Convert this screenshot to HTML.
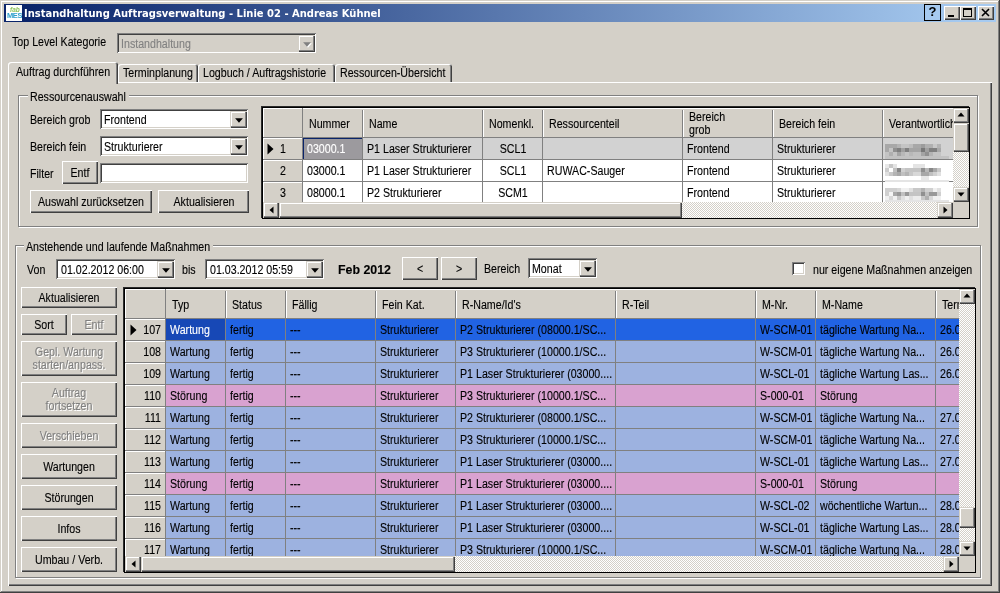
<!DOCTYPE html>
<html lang="de"><head><meta charset="utf-8"><title>Instandhaltung Auftragsverwaltung</title>
<style>
html,body{margin:0;padding:0;background:#D4D0C8;}
body{width:1000px;height:593px;overflow:hidden;position:relative;will-change:transform;font-family:"Liberation Sans",sans-serif;font-size:12.5px;color:#000}
.a{position:absolute;box-sizing:border-box}
.t{position:absolute;white-space:nowrap;font-size:12.5px;line-height:14px;transform:scaleX(0.852);transform-origin:0 0;-webkit-text-stroke:0.12px currentColor}
.b{font-weight:bold;transform:scaleX(.99)}
.tt{font-family:"DejaVu Sans","Liberation Sans",sans-serif;font-weight:bold;font-size:11px;line-height:16px;color:#fff;white-space:nowrap;transform:scaleX(.906);transform-origin:0 0}
.rs{box-shadow:inset 1px 1px 0 #FFFFFF, inset -1px -1px 0 #404040, inset -2px -2px 0 #808080, inset 2px 2px 0 #D4D0C8}
.rs2{box-shadow:inset 1px 1px 0 #D4D0C8, inset -1px -1px 0 #404040, inset -2px -2px 0 #808080, inset 2px 2px 0 #FFFFFF}
.sk{box-shadow:inset 1px 1px 0 #808080, inset -1px -1px 0 #FFFFFF, inset 2px 2px 0 #404040, inset -2px -2px 0 #D4D0C8}
.hc{background:#D4D0C8;border-right:1px solid #808080;border-bottom:1px solid #808080;box-shadow:inset 1px 1px 0 #fff}
.dc{border-right:1px solid #808080;border-bottom:1px solid #808080}
.dz{background-color:#fff;background-image:linear-gradient(45deg,#D4D0C8 25%,transparent 25%,transparent 75%,#D4D0C8 75%),linear-gradient(45deg,#D4D0C8 25%,transparent 25%,transparent 75%,#D4D0C8 75%);background-size:2px 2px;background-position:0 0,1px 1px}
</style></head>
<body>
<div class="a" style="left:0;top:0;width:1000px;height:593px;background:#D4D0C8"></div>
<div class="a" style="left:0px;top:0px;width:999px;height:1px;background:#D4D0C8;"></div>
<div class="a" style="left:0px;top:0px;width:1px;height:592px;background:#D4D0C8;"></div>
<div class="a" style="left:1px;top:1px;width:997px;height:1px;background:#FFFFFF;"></div>
<div class="a" style="left:1px;top:1px;width:1px;height:590px;background:#FFFFFF;"></div>
<div class="a" style="left:999px;top:0px;width:1px;height:593px;background:#404040;"></div>
<div class="a" style="left:0px;top:592px;width:1000px;height:1px;background:#404040;"></div>
<div class="a" style="left:998px;top:1px;width:1px;height:591px;background:#808080;"></div>
<div class="a" style="left:1px;top:591px;width:998px;height:1px;background:#808080;"></div>
<div class="a" style="left:4px;top:4px;width:992px;height:18px;background:linear-gradient(90deg,#0A246A 0%,#0A246A 2%,#A6CAF0 97%,#A6CAF0 100%)"></div>
<div class="a" style="left:6px;top:5px;width:16px;height:16px;background:#fff;overflow:hidden"><span class="a" style="left:3.5px;top:1px;font:italic bold 6.5px/7px 'Liberation Sans',sans-serif;color:#8CC25A;will-change:transform">fab</span><span class="a" style="left:1px;top:7px;font:bold 7.5px/8px 'Liberation Sans',sans-serif;color:#2FA0CC;letter-spacing:-0.4px;will-change:transform">MES</span></div>
<span class="a tt" style="left:23.5px;top:6px">Instandhaltung Auftragsverwaltung - Linie 02 - Andreas Kühnel</span>
<div class="a" style="left:924px;top:4px;width:17px;height:17px;border:1px solid #000;box-sizing:border-box;background:#A6CAF0"></div>
<span class="a" style="left:924px;top:4px;width:17px;text-align:center;font:bold 13px/16px 'Liberation Sans',sans-serif;color:#000">?</span>
<div class="a rs" style="left:944px;top:6px;width:16px;height:14px;background:#D4D0C8"></div>
<div class="a rs" style="left:960px;top:6px;width:16px;height:14px;background:#D4D0C8"></div>
<div class="a rs" style="left:978px;top:6px;width:16px;height:14px;background:#D4D0C8"></div>
<div class="a" style="left:948px;top:15px;width:6px;height:2px;background:#000;"></div>
<div class="a" style="left:963px;top:8px;width:9px;height:9px;border:1px solid #000;border-top-width:2px;box-sizing:border-box"></div>
<svg class="a" style="left:978px;top:6px" width="16" height="14"><path d="M4 3 L11 10 M11 3 L4 10" stroke="#000" stroke-width="1.6" fill="none"/></svg>
<span class="t" style="top:35.4px;left:12px;">Top Level Kategorie</span>
<div class="a sk" style="left:117px;top:33px;width:199px;height:20px;background:#D4D0C8"></div>
<div class="a rs2" style="left:298px;top:35px;width:17px;height:17px;background:#D4D0C8"></div>
<svg class="a" style="left:299.5px;top:36.5px" width="16" height="16"><polygon points="4.1,6.3 11.9,6.3 8,10.7" fill="#fff"/></svg>
<svg class="a" style="left:298.5px;top:35.5px" width="16" height="16"><polygon points="4.1,6.3 11.9,6.3 8,10.7" fill="#808080"/></svg>
<span class="t" style="top:36.9px;left:121px;color:#808080;">Instandhaltung</span>
<div class="a rs" style="left:8px;top:82px;width:984px;height:504px;background:#D4D0C8"></div>
<div class="a" style="left:118px;top:64px;width:80px;height:18px;background:#D4D0C8;border-radius:3px 3px 0 0;box-shadow:inset 1px 1px 0 #fff, inset -1px 0 0 #404040, inset -2px 0 0 #808080"></div>
<span class="t" style="top:66.1px;left:123px;">Terminplanung</span>
<div class="a" style="left:198px;top:64px;width:137px;height:18px;background:#D4D0C8;border-radius:3px 3px 0 0;box-shadow:inset 1px 1px 0 #fff, inset -1px 0 0 #404040, inset -2px 0 0 #808080"></div>
<span class="t" style="top:66.1px;left:203px;">Logbuch / Auftragshistorie</span>
<div class="a" style="left:335px;top:64px;width:117px;height:18px;background:#D4D0C8;border-radius:3px 3px 0 0;box-shadow:inset 1px 1px 0 #fff, inset -1px 0 0 #404040, inset -2px 0 0 #808080"></div>
<span class="t" style="top:66.1px;left:340px;">Ressourcen-Übersicht</span>
<div class="a" style="left:8px;top:62px;width:110px;height:22px;background:#D4D0C8;border-radius:3px 3px 0 0;box-shadow:inset 1px 1px 0 #fff, inset -1px 0 0 #404040, inset -2px 0 0 #808080"></div>
<span class="t" style="top:65.4px;left:16px;">Auftrag durchführen</span>
<div class="a" style="left:18px;top:95px;width:960px;height:132px;border:1px solid #808080;box-shadow:1px 1px 0 #fff, inset 1px 1px 0 #fff;box-sizing:border-box"></div>
<div class="a" style="left:28px;top:93px;width:101px;height:5px;background:#D4D0C8;"></div>
<span class="t" style="top:90.4px;left:30px;">Ressourcenauswahl</span>
<span class="t" style="top:112.9px;left:30px;">Bereich grob</span>
<div class="a sk" style="left:100px;top:109px;width:148px;height:20px;background:#fff"></div>
<div class="a rs2" style="left:230px;top:111px;width:17px;height:17px;background:#D4D0C8"></div>
<svg class="a" style="left:230.5px;top:111.5px" width="16" height="16"><polygon points="4.1,6.3 11.9,6.3 8,10.7" fill="#000"/></svg>
<span class="t" style="top:112.9px;left:104px;">Frontend</span>
<span class="t" style="top:139.9px;left:30px;">Bereich fein</span>
<div class="a sk" style="left:100px;top:136px;width:148px;height:20px;background:#fff"></div>
<div class="a rs2" style="left:230px;top:138px;width:17px;height:17px;background:#D4D0C8"></div>
<svg class="a" style="left:230.5px;top:138.5px" width="16" height="16"><polygon points="4.1,6.3 11.9,6.3 8,10.7" fill="#000"/></svg>
<span class="t" style="top:139.9px;left:104px;">Strukturierer</span>
<span class="t" style="top:166.9px;left:30px;">Filter</span>
<div class="a rs" style="left:62px;top:161px;width:36px;height:23px;background:#D4D0C8"></div>
<span class="t" style="top:165.9px;left:-220.0px;width:600px;text-align:center;transform-origin:50% 0;">Entf</span>
<div class="a sk" style="left:100px;top:163px;width:148px;height:20px;background:#fff"></div>
<div class="a rs" style="left:30px;top:190px;width:122px;height:23px;background:#D4D0C8"></div>
<span class="t" style="top:194.9px;left:-209.0px;width:600px;text-align:center;transform-origin:50% 0;">Auswahl zurücksetzen</span>
<div class="a rs" style="left:158px;top:190px;width:91px;height:23px;background:#D4D0C8"></div>
<span class="t" style="top:194.9px;left:-96.5px;width:600px;text-align:center;transform-origin:50% 0;">Aktualisieren</span>
<div class="a" style="left:262px;top:107px;width:708px;height:112px;background:#D4D0C8;border:1px solid #000;box-shadow:-1px -1px 0 #2a2a2a"></div>
<div class="a" style="left:263px;top:108px;width:690px;height:94px;overflow:hidden">
<div class="a" style="left:0px;top:0px;width:40px;height:30px;background:#D4D0C8;border-top:1px solid #fff;border-bottom:1px solid #808080"></div>
<div class="a" style="left:0px;top:0px;width:1px;height:29px;background:#fff"></div>
<div class="a" style="left:39px;top:0px;width:1px;height:30px;background:#808080"></div>
<div class="a" style="left:40px;top:0px;width:60px;height:30px;background:#D4D0C8;border-top:1px solid #fff;border-bottom:1px solid #808080"></div>
<div class="a" style="left:99px;top:2px;width:1px;height:27px;background:#808080;z-index:1"></div>
<div class="a" style="left:100px;top:2px;width:1px;height:27px;background:#fff;z-index:1"></div>
<span class="t" style="top:8.9px;left:46px;">Nummer</span>
<div class="a" style="left:100px;top:0px;width:120px;height:30px;background:#D4D0C8;border-top:1px solid #fff;border-bottom:1px solid #808080"></div>
<div class="a" style="left:219px;top:2px;width:1px;height:27px;background:#808080;z-index:1"></div>
<div class="a" style="left:220px;top:2px;width:1px;height:27px;background:#fff;z-index:1"></div>
<span class="t" style="top:8.9px;left:106px;">Name</span>
<div class="a" style="left:220px;top:0px;width:60px;height:30px;background:#D4D0C8;border-top:1px solid #fff;border-bottom:1px solid #808080"></div>
<div class="a" style="left:279px;top:2px;width:1px;height:27px;background:#808080;z-index:1"></div>
<div class="a" style="left:280px;top:2px;width:1px;height:27px;background:#fff;z-index:1"></div>
<span class="t" style="top:8.9px;left:226px;">Nomenkl.</span>
<div class="a" style="left:280px;top:0px;width:140px;height:30px;background:#D4D0C8;border-top:1px solid #fff;border-bottom:1px solid #808080"></div>
<div class="a" style="left:419px;top:2px;width:1px;height:27px;background:#808080;z-index:1"></div>
<div class="a" style="left:420px;top:2px;width:1px;height:27px;background:#fff;z-index:1"></div>
<span class="t" style="top:8.9px;left:286px;">Ressourcenteil</span>
<div class="a" style="left:420px;top:0px;width:90px;height:30px;background:#D4D0C8;border-top:1px solid #fff;border-bottom:1px solid #808080"></div>
<div class="a" style="left:509px;top:2px;width:1px;height:27px;background:#808080;z-index:1"></div>
<div class="a" style="left:510px;top:2px;width:1px;height:27px;background:#fff;z-index:1"></div>
<span class="t" style="top:2.4px;left:426px;">Bereich</span>
<span class="t" style="top:15.4px;left:426px;">grob</span>
<div class="a" style="left:510px;top:0px;width:110px;height:30px;background:#D4D0C8;border-top:1px solid #fff;border-bottom:1px solid #808080"></div>
<div class="a" style="left:619px;top:2px;width:1px;height:27px;background:#808080;z-index:1"></div>
<div class="a" style="left:620px;top:2px;width:1px;height:27px;background:#fff;z-index:1"></div>
<span class="t" style="top:8.9px;left:516px;">Bereich fein</span>
<div class="a" style="left:620px;top:0px;width:90px;height:30px;background:#D4D0C8;border-top:1px solid #fff;border-bottom:1px solid #808080"></div>
<div class="a" style="left:709px;top:2px;width:1px;height:27px;background:#808080;z-index:1"></div>
<div class="a" style="left:710px;top:2px;width:1px;height:27px;background:#fff;z-index:1"></div>
<span class="t" style="top:8.9px;left:626px;">Verantwortlich</span>
<div class="a hc" style="left:0px;top:30px;width:40px;height:22px"></div>
<span class="t" style="top:34.4px;left:-280px;width:600px;text-align:center;transform-origin:50% 0;">1</span>
<div class="a dc" style="left:40px;top:30px;width:60px;height:22px;background:#9C9A9E"></div>
<span class="t" style="top:34.4px;left:44px;color:#fff;">03000.1</span>
<div class="a dc" style="left:100px;top:30px;width:120px;height:22px;background:#D2D2D2"></div>
<span class="t" style="top:34.4px;left:104px;">P1 Laser Strukturierer</span>
<div class="a dc" style="left:220px;top:30px;width:60px;height:22px;background:#D2D2D2"></div>
<span class="t" style="top:34.4px;left:-50.0px;width:600px;text-align:center;transform-origin:50% 0;">SCL1</span>
<div class="a dc" style="left:280px;top:30px;width:140px;height:22px;background:#D2D2D2"></div>
<div class="a dc" style="left:420px;top:30px;width:90px;height:22px;background:#D2D2D2"></div>
<span class="t" style="top:34.4px;left:424px;">Frontend</span>
<div class="a dc" style="left:510px;top:30px;width:110px;height:22px;background:#D2D2D2"></div>
<span class="t" style="top:34.4px;left:514px;">Strukturierer</span>
<div class="a dc" style="left:620px;top:30px;width:90px;height:22px;background:#D2D2D2"></div>
<svg class="a" style="left:622px;top:36px" width="68" height="20"><rect x="0" y="0" width="4" height="4" fill="#a8a8a8"/><rect x="4" y="0" width="4" height="4" fill="#a8a8a8"/><rect x="8" y="0" width="4" height="4" fill="#a8a8a8"/><rect x="12" y="0" width="4" height="4" fill="#b4b4b4"/><rect x="16" y="0" width="4" height="4" fill="#c4c4c4"/><rect x="20" y="0" width="4" height="4" fill="#c4c4c4"/><rect x="24" y="0" width="4" height="4" fill="#bcbcbc"/><rect x="28" y="0" width="4" height="4" fill="#a8a8a8"/><rect x="32" y="0" width="4" height="4" fill="#a8a8a8"/><rect x="36" y="0" width="4" height="4" fill="#9c9c9c"/><rect x="40" y="0" width="4" height="4" fill="#b0b0b0"/><rect x="44" y="0" width="4" height="4" fill="#b0b0b0"/><rect x="48" y="0" width="4" height="4" fill="#c8c8c8"/><rect x="52" y="0" width="4" height="4" fill="#b4b4b4"/><rect x="0" y="4" width="4" height="4" fill="#a8a8a8"/><rect x="4" y="4" width="4" height="4" fill="#c4c4c4"/><rect x="8" y="4" width="4" height="4" fill="#909090"/><rect x="12" y="4" width="4" height="4" fill="#808080"/><rect x="16" y="4" width="4" height="4" fill="#a0a0a0"/><rect x="20" y="4" width="4" height="4" fill="#808080"/><rect x="24" y="4" width="4" height="4" fill="#a4a4a4"/><rect x="28" y="4" width="4" height="4" fill="#a4a4a4"/><rect x="32" y="4" width="4" height="4" fill="#a4a4a4"/><rect x="36" y="4" width="4" height="4" fill="#787878"/><rect x="40" y="4" width="4" height="4" fill="#a0a0a0"/><rect x="44" y="4" width="4" height="4" fill="#808080"/><rect x="48" y="4" width="4" height="4" fill="#808080"/><rect x="52" y="4" width="4" height="4" fill="#a8a8a8"/><rect x="0" y="8" width="4" height="4" fill="#c4c4c4"/><rect x="4" y="8" width="4" height="4" fill="#b0b0b0"/><rect x="8" y="8" width="4" height="4" fill="#c4c4c4"/><rect x="12" y="8" width="4" height="4" fill="#a4a4a4"/><rect x="16" y="8" width="4" height="4" fill="#b8b8b8"/><rect x="20" y="8" width="4" height="4" fill="#c4c4c4"/><rect x="24" y="8" width="4" height="4" fill="#b8b8b8"/><rect x="28" y="8" width="4" height="4" fill="#c0c0c0"/><rect x="32" y="8" width="4" height="4" fill="#c0c0c0"/><rect x="36" y="8" width="4" height="4" fill="#a4a4a4"/><rect x="40" y="8" width="4" height="4" fill="#909090"/><rect x="44" y="8" width="4" height="4" fill="#b4b4b4"/><rect x="48" y="8" width="4" height="4" fill="#c4c4c4"/><rect x="52" y="8" width="4" height="4" fill="#c4c4c4"/><rect x="0" y="12" width="64" height="3" fill="#c2c2c2"/></svg>
<div class="a hc" style="left:0px;top:52px;width:40px;height:22px"></div>
<span class="t" style="top:56.4px;left:-280px;width:600px;text-align:center;transform-origin:50% 0;">2</span>
<div class="a dc" style="left:40px;top:52px;width:60px;height:22px;background:#fff"></div>
<span class="t" style="top:56.4px;left:44px;">03000.1</span>
<div class="a dc" style="left:100px;top:52px;width:120px;height:22px;background:#fff"></div>
<span class="t" style="top:56.4px;left:104px;">P1 Laser Strukturierer</span>
<div class="a dc" style="left:220px;top:52px;width:60px;height:22px;background:#fff"></div>
<span class="t" style="top:56.4px;left:-50.0px;width:600px;text-align:center;transform-origin:50% 0;">SCL1</span>
<div class="a dc" style="left:280px;top:52px;width:140px;height:22px;background:#fff"></div>
<span class="t" style="top:56.4px;left:284px;">RUWAC-Sauger</span>
<div class="a dc" style="left:420px;top:52px;width:90px;height:22px;background:#fff"></div>
<span class="t" style="top:56.4px;left:424px;">Frontend</span>
<div class="a dc" style="left:510px;top:52px;width:110px;height:22px;background:#fff"></div>
<span class="t" style="top:56.4px;left:514px;">Strukturierer</span>
<div class="a dc" style="left:620px;top:52px;width:90px;height:22px;background:#fff"></div>
<svg class="a" style="left:622px;top:56px" width="68" height="20"><rect x="0" y="0" width="4" height="4" fill="#e8e8e8"/><rect x="4" y="0" width="4" height="4" fill="#c8c8c8"/><rect x="8" y="0" width="4" height="4" fill="#e4e4e4"/><rect x="12" y="0" width="4" height="4" fill="#ffffff"/><rect x="16" y="0" width="4" height="4" fill="#ffffff"/><rect x="20" y="0" width="4" height="4" fill="#ffffff"/><rect x="24" y="0" width="4" height="4" fill="#ffffff"/><rect x="28" y="0" width="4" height="4" fill="#e4e4e4"/><rect x="32" y="0" width="4" height="4" fill="#e4e4e4"/><rect x="36" y="0" width="4" height="4" fill="#e4e4e4"/><rect x="40" y="0" width="4" height="4" fill="#ffffff"/><rect x="44" y="0" width="4" height="4" fill="#ffffff"/><rect x="48" y="0" width="4" height="4" fill="#ffffff"/><rect x="52" y="0" width="4" height="4" fill="#ffffff"/><rect x="0" y="4" width="4" height="4" fill="#cccccc"/><rect x="4" y="4" width="4" height="4" fill="#ffffff"/><rect x="8" y="4" width="4" height="4" fill="#c0c0c0"/><rect x="12" y="4" width="4" height="4" fill="#888888"/><rect x="16" y="4" width="4" height="4" fill="#d0d0d0"/><rect x="20" y="4" width="4" height="4" fill="#c4c4c4"/><rect x="24" y="4" width="4" height="4" fill="#c4c4c4"/><rect x="28" y="4" width="4" height="4" fill="#c4c4c4"/><rect x="32" y="4" width="4" height="4" fill="#c4c4c4"/><rect x="36" y="4" width="4" height="4" fill="#909090"/><rect x="40" y="4" width="4" height="4" fill="#b8b8b8"/><rect x="44" y="4" width="4" height="4" fill="#888888"/><rect x="48" y="4" width="4" height="4" fill="#a8a8a8"/><rect x="52" y="4" width="4" height="4" fill="#c8c8c8"/><rect x="0" y="8" width="4" height="4" fill="#e0e0e0"/><rect x="4" y="8" width="4" height="4" fill="#c8c8c8"/><rect x="8" y="8" width="4" height="4" fill="#b4b4b4"/><rect x="12" y="8" width="4" height="4" fill="#a8a8a8"/><rect x="16" y="8" width="4" height="4" fill="#c0c0c0"/><rect x="20" y="8" width="4" height="4" fill="#b4b4b4"/><rect x="24" y="8" width="4" height="4" fill="#c8c8c8"/><rect x="28" y="8" width="4" height="4" fill="#d8d8d8"/><rect x="32" y="8" width="4" height="4" fill="#d8d8d8"/><rect x="36" y="8" width="4" height="4" fill="#a8a8a8"/><rect x="40" y="8" width="4" height="4" fill="#a8a8a8"/><rect x="44" y="8" width="4" height="4" fill="#c0c0c0"/><rect x="48" y="8" width="4" height="4" fill="#d0d0d0"/><rect x="52" y="8" width="4" height="4" fill="#e0e0e0"/><rect x="36" y="12" width="8" height="4" fill="#e8e8e8"/><rect x="0" y="16" width="64" height="4" fill="#e4e4e4"/></svg>
<div class="a hc" style="left:0px;top:74px;width:40px;height:22px"></div>
<span class="t" style="top:78.4px;left:-280px;width:600px;text-align:center;transform-origin:50% 0;">3</span>
<div class="a dc" style="left:40px;top:74px;width:60px;height:22px;background:#fff"></div>
<span class="t" style="top:78.4px;left:44px;">08000.1</span>
<div class="a dc" style="left:100px;top:74px;width:120px;height:22px;background:#fff"></div>
<span class="t" style="top:78.4px;left:104px;">P2 Strukturierer</span>
<div class="a dc" style="left:220px;top:74px;width:60px;height:22px;background:#fff"></div>
<span class="t" style="top:78.4px;left:-50.0px;width:600px;text-align:center;transform-origin:50% 0;">SCM1</span>
<div class="a dc" style="left:280px;top:74px;width:140px;height:22px;background:#fff"></div>
<div class="a dc" style="left:420px;top:74px;width:90px;height:22px;background:#fff"></div>
<span class="t" style="top:78.4px;left:424px;">Frontend</span>
<div class="a dc" style="left:510px;top:74px;width:110px;height:22px;background:#fff"></div>
<span class="t" style="top:78.4px;left:514px;">Strukturierer</span>
<div class="a dc" style="left:620px;top:74px;width:90px;height:22px;background:#fff"></div>
<svg class="a" style="left:622px;top:80px" width="68" height="20"><rect x="0" y="0" width="4" height="4" fill="#d0d0d0"/><rect x="4" y="0" width="4" height="4" fill="#d0d0d0"/><rect x="8" y="0" width="4" height="4" fill="#d0d0d0"/><rect x="12" y="0" width="4" height="4" fill="#d8d8d8"/><rect x="16" y="0" width="4" height="4" fill="#f0f0f0"/><rect x="20" y="0" width="4" height="4" fill="#f0f0f0"/><rect x="24" y="0" width="4" height="4" fill="#e0e0e0"/><rect x="28" y="0" width="4" height="4" fill="#c8c8c8"/><rect x="32" y="0" width="4" height="4" fill="#c8c8c8"/><rect x="36" y="0" width="4" height="4" fill="#b4b4b4"/><rect x="40" y="0" width="4" height="4" fill="#d0d0d0"/><rect x="44" y="0" width="4" height="4" fill="#d0d0d0"/><rect x="48" y="0" width="4" height="4" fill="#f0f0f0"/><rect x="52" y="0" width="4" height="4" fill="#e0e0e0"/><rect x="0" y="4" width="4" height="4" fill="#d0d0d0"/><rect x="4" y="4" width="4" height="4" fill="#f4f4f4"/><rect x="8" y="4" width="4" height="4" fill="#a8a8a8"/><rect x="12" y="4" width="4" height="4" fill="#989898"/><rect x="16" y="4" width="4" height="4" fill="#c0c0c0"/><rect x="20" y="4" width="4" height="4" fill="#989898"/><rect x="24" y="4" width="4" height="4" fill="#c4c4c4"/><rect x="28" y="4" width="4" height="4" fill="#c4c4c4"/><rect x="32" y="4" width="4" height="4" fill="#c4c4c4"/><rect x="36" y="4" width="4" height="4" fill="#909090"/><rect x="40" y="4" width="4" height="4" fill="#c0c0c0"/><rect x="44" y="4" width="4" height="4" fill="#989898"/><rect x="48" y="4" width="4" height="4" fill="#989898"/><rect x="52" y="4" width="4" height="4" fill="#d0d0d0"/><rect x="0" y="8" width="4" height="4" fill="#f0f0f0"/><rect x="4" y="8" width="4" height="4" fill="#d8d8d8"/><rect x="8" y="8" width="4" height="4" fill="#f0f0f0"/><rect x="12" y="8" width="4" height="4" fill="#c8c8c8"/><rect x="16" y="8" width="4" height="4" fill="#e0e0e0"/><rect x="20" y="8" width="4" height="4" fill="#f0f0f0"/><rect x="24" y="8" width="4" height="4" fill="#e0e0e0"/><rect x="28" y="8" width="4" height="4" fill="#ececec"/><rect x="32" y="8" width="4" height="4" fill="#ececec"/><rect x="36" y="8" width="4" height="4" fill="#c8c8c8"/><rect x="40" y="8" width="4" height="4" fill="#b0b0b0"/><rect x="44" y="8" width="4" height="4" fill="#d8d8d8"/><rect x="48" y="8" width="4" height="4" fill="#f0f0f0"/><rect x="52" y="8" width="4" height="4" fill="#f0f0f0"/><rect x="0" y="12" width="64" height="3" fill="#e4e4e4"/></svg>
<div class="a" style="left:40px;top:30px;width:59px;height:21px;border-top:1px solid #0A246A;border-left:1px solid #0A246A;box-sizing:border-box"></div>
</div>
<svg class="a" style="left:262px;top:140.5px" width="16" height="16"><polygon points="5.5,2.5 5.5,13.5 11.5,8" fill="#000"/></svg>
<div class="a dz" style="left:953px;top:108px;width:16px;height:94px"></div>
<div class="a rs2" style="left:953px;top:108px;width:16px;height:15px;background:#D4D0C8"></div>
<svg class="a" style="left:953.0px;top:106.0px" width="16" height="16"><polygon points="4.5,10.5 11.5,10.5 8,6.5" fill="#000"/></svg>
<div class="a rs2" style="left:953px;top:123px;width:16px;height:29px;background:#D4D0C8"></div>
<div class="a rs2" style="left:953px;top:187px;width:16px;height:15px;background:#D4D0C8"></div>
<svg class="a" style="left:953.0px;top:185.8px" width="16" height="16"><polygon points="4.5,6.5 11.5,6.5 8,10.5" fill="#000"/></svg>
<div class="a dz" style="left:263px;top:202px;width:690px;height:16px"></div>
<div class="a rs2" style="left:263px;top:202px;width:16px;height:16px;background:#D4D0C8"></div>
<svg class="a" style="left:263.0px;top:201.5px" width="16" height="16"><polygon points="10.5,4.5 10.5,11.5 6.5,8" fill="#000"/></svg>
<div class="a rs2" style="left:279px;top:202px;width:403px;height:16px;background:#D4D0C8"></div>
<div class="a rs2" style="left:937px;top:202px;width:16px;height:16px;background:#D4D0C8"></div>
<svg class="a" style="left:937.0px;top:201.5px" width="16" height="16"><polygon points="6.5,4.5 6.5,11.5 10.5,8" fill="#000"/></svg>
<div class="a" style="left:953px;top:202px;width:16px;height:16px;background:#D4D0C8;"></div>
<div class="a" style="left:15px;top:245px;width:966px;height:333px;border:1px solid #808080;box-shadow:1px 1px 0 #fff, inset 1px 1px 0 #fff;box-sizing:border-box"></div>
<div class="a" style="left:24px;top:243px;width:189px;height:5px;background:#D4D0C8;"></div>
<span class="t" style="top:240.4px;left:26px;">Anstehende und laufende Maßnahmen</span>
<span class="t" style="top:262.9px;left:27px;">Von</span>
<div class="a sk" style="left:56px;top:259px;width:119px;height:20px;background:#fff"></div>
<div class="a rs2" style="left:157px;top:261px;width:17px;height:17px;background:#D4D0C8"></div>
<svg class="a" style="left:157.5px;top:261.5px" width="16" height="16"><polygon points="4.1,6.3 11.9,6.3 8,10.7" fill="#000"/></svg>
<span class="t" style="top:263.4px;left:60.5px;">01.02.2012 06:00</span>
<span class="t" style="top:262.9px;left:182px;">bis</span>
<div class="a sk" style="left:205px;top:259px;width:119px;height:20px;background:#fff"></div>
<div class="a rs2" style="left:306px;top:261px;width:17px;height:17px;background:#D4D0C8"></div>
<svg class="a" style="left:306.5px;top:261.5px" width="16" height="16"><polygon points="4.1,6.3 11.9,6.3 8,10.7" fill="#000"/></svg>
<span class="t" style="top:263.4px;left:209.5px;">01.03.2012 05:59</span>
<span class="t b" style="top:262.9px;left:337.5px;">Feb 2012</span>
<div class="a rs" style="left:402px;top:257px;width:36px;height:23px;background:#D4D0C8"></div>
<span class="t" style="top:261.9px;left:120.0px;width:600px;text-align:center;transform-origin:50% 0;">&lt;</span>
<div class="a rs" style="left:441px;top:257px;width:36px;height:23px;background:#D4D0C8"></div>
<span class="t" style="top:261.9px;left:159.0px;width:600px;text-align:center;transform-origin:50% 0;">&gt;</span>
<span class="t" style="top:262.4px;left:483.5px;">Bereich</span>
<div class="a sk" style="left:528px;top:258px;width:69px;height:20px;background:#fff"></div>
<div class="a rs2" style="left:579px;top:260px;width:17px;height:17px;background:#D4D0C8"></div>
<svg class="a" style="left:579.5px;top:260.5px" width="16" height="16"><polygon points="4.1,6.3 11.9,6.3 8,10.7" fill="#000"/></svg>
<span class="t" style="top:261.9px;left:532px;">Monat</span>
<div class="a sk" style="left:792px;top:262px;width:13px;height:13px;background:#fff"></div>
<span class="t" style="top:262.9px;left:812.5px;">nur eigene Maßnahmen anzeigen</span>
<div class="a rs" style="left:21px;top:287px;width:96px;height:21px;background:#D4D0C8"></div>
<span class="t" style="top:290.9px;left:-231.0px;width:600px;text-align:center;transform-origin:50% 0;">Aktualisieren</span>
<div class="a rs" style="left:21px;top:314px;width:46px;height:21px;background:#D4D0C8"></div>
<span class="t" style="top:317.9px;left:-256.0px;width:600px;text-align:center;transform-origin:50% 0;">Sort</span>
<div class="a rs" style="left:71px;top:314px;width:46px;height:21px;background:#D4D0C8"></div>
<span class="t" style="top:317.9px;left:-206.0px;width:600px;text-align:center;transform-origin:50% 0;color:#808080;text-shadow:1.2px 1px 0 #fff;">Entf</span>
<div class="a rs" style="left:21px;top:341px;width:96px;height:35px;background:#D4D0C8"></div>
<span class="t" style="top:345.4px;left:-231.0px;width:600px;text-align:center;transform-origin:50% 0;color:#808080;text-shadow:1.2px 1px 0 #fff;">Gepl. Wartung</span>
<span class="t" style="top:358.4px;left:-231.0px;width:600px;text-align:center;transform-origin:50% 0;color:#808080;text-shadow:1.2px 1px 0 #fff;">starten/anpass.</span>
<div class="a rs" style="left:21px;top:382px;width:96px;height:35px;background:#D4D0C8"></div>
<span class="t" style="top:386.4px;left:-231.0px;width:600px;text-align:center;transform-origin:50% 0;color:#808080;text-shadow:1.2px 1px 0 #fff;">Auftrag</span>
<span class="t" style="top:399.4px;left:-231.0px;width:600px;text-align:center;transform-origin:50% 0;color:#808080;text-shadow:1.2px 1px 0 #fff;">fortsetzen</span>
<div class="a rs" style="left:21px;top:423px;width:96px;height:25px;background:#D4D0C8"></div>
<span class="t" style="top:428.9px;left:-231.0px;width:600px;text-align:center;transform-origin:50% 0;color:#808080;text-shadow:1.2px 1px 0 #fff;">Verschieben</span>
<div class="a rs" style="left:21px;top:454px;width:96px;height:25px;background:#D4D0C8"></div>
<span class="t" style="top:459.9px;left:-231.0px;width:600px;text-align:center;transform-origin:50% 0;">Wartungen</span>
<div class="a rs" style="left:21px;top:485px;width:96px;height:25px;background:#D4D0C8"></div>
<span class="t" style="top:490.9px;left:-231.0px;width:600px;text-align:center;transform-origin:50% 0;">Störungen</span>
<div class="a rs" style="left:21px;top:516px;width:96px;height:25px;background:#D4D0C8"></div>
<span class="t" style="top:521.9px;left:-231.0px;width:600px;text-align:center;transform-origin:50% 0;">Infos</span>
<div class="a rs" style="left:21px;top:547px;width:96px;height:25px;background:#D4D0C8"></div>
<span class="t" style="top:552.9px;left:-231.0px;width:600px;text-align:center;transform-origin:50% 0;">Umbau / Verb.</span>
<div class="a" style="left:124px;top:288px;width:852px;height:285px;background:#D4D0C8;border:1px solid #000;box-shadow:-1px -1px 0 #2a2a2a"></div>
<div class="a" style="left:125px;top:289px;width:834px;height:267px;overflow:hidden">
<div class="a" style="left:0px;top:0px;width:41px;height:30px;background:#D4D0C8;border-top:1px solid #fff;border-bottom:1px solid #808080"></div>
<div class="a" style="left:0px;top:0px;width:1px;height:29px;background:#fff"></div>
<div class="a" style="left:40px;top:0px;width:1px;height:30px;background:#808080"></div>
<div class="a" style="left:41px;top:0px;width:60px;height:30px;background:#D4D0C8;border-top:1px solid #fff;border-bottom:1px solid #808080"></div>
<div class="a" style="left:100px;top:2px;width:1px;height:27px;background:#808080;z-index:1"></div>
<div class="a" style="left:101px;top:2px;width:1px;height:27px;background:#fff;z-index:1"></div>
<span class="t" style="top:8.9px;left:47px;">Typ</span>
<div class="a" style="left:101px;top:0px;width:60px;height:30px;background:#D4D0C8;border-top:1px solid #fff;border-bottom:1px solid #808080"></div>
<div class="a" style="left:160px;top:2px;width:1px;height:27px;background:#808080;z-index:1"></div>
<div class="a" style="left:161px;top:2px;width:1px;height:27px;background:#fff;z-index:1"></div>
<span class="t" style="top:8.9px;left:107px;">Status</span>
<div class="a" style="left:161px;top:0px;width:90px;height:30px;background:#D4D0C8;border-top:1px solid #fff;border-bottom:1px solid #808080"></div>
<div class="a" style="left:250px;top:2px;width:1px;height:27px;background:#808080;z-index:1"></div>
<div class="a" style="left:251px;top:2px;width:1px;height:27px;background:#fff;z-index:1"></div>
<span class="t" style="top:8.9px;left:167px;">Fällig</span>
<div class="a" style="left:251px;top:0px;width:80px;height:30px;background:#D4D0C8;border-top:1px solid #fff;border-bottom:1px solid #808080"></div>
<div class="a" style="left:330px;top:2px;width:1px;height:27px;background:#808080;z-index:1"></div>
<div class="a" style="left:331px;top:2px;width:1px;height:27px;background:#fff;z-index:1"></div>
<span class="t" style="top:8.9px;left:257px;">Fein Kat.</span>
<div class="a" style="left:331px;top:0px;width:160px;height:30px;background:#D4D0C8;border-top:1px solid #fff;border-bottom:1px solid #808080"></div>
<div class="a" style="left:490px;top:2px;width:1px;height:27px;background:#808080;z-index:1"></div>
<div class="a" style="left:491px;top:2px;width:1px;height:27px;background:#fff;z-index:1"></div>
<span class="t" style="top:8.9px;left:337px;">R-Name/Id's</span>
<div class="a" style="left:491px;top:0px;width:140px;height:30px;background:#D4D0C8;border-top:1px solid #fff;border-bottom:1px solid #808080"></div>
<div class="a" style="left:630px;top:2px;width:1px;height:27px;background:#808080;z-index:1"></div>
<div class="a" style="left:631px;top:2px;width:1px;height:27px;background:#fff;z-index:1"></div>
<span class="t" style="top:8.9px;left:497px;">R-Teil</span>
<div class="a" style="left:631px;top:0px;width:60px;height:30px;background:#D4D0C8;border-top:1px solid #fff;border-bottom:1px solid #808080"></div>
<div class="a" style="left:690px;top:2px;width:1px;height:27px;background:#808080;z-index:1"></div>
<div class="a" style="left:691px;top:2px;width:1px;height:27px;background:#fff;z-index:1"></div>
<span class="t" style="top:8.9px;left:637px;">M-Nr.</span>
<div class="a" style="left:691px;top:0px;width:120px;height:30px;background:#D4D0C8;border-top:1px solid #fff;border-bottom:1px solid #808080"></div>
<div class="a" style="left:810px;top:2px;width:1px;height:27px;background:#808080;z-index:1"></div>
<div class="a" style="left:811px;top:2px;width:1px;height:27px;background:#fff;z-index:1"></div>
<span class="t" style="top:8.9px;left:697px;">M-Name</span>
<div class="a" style="left:811px;top:0px;width:60px;height:30px;background:#D4D0C8;border-top:1px solid #fff;border-bottom:1px solid #808080"></div>
<div class="a" style="left:870px;top:2px;width:1px;height:27px;background:#808080;z-index:1"></div>
<div class="a" style="left:871px;top:2px;width:1px;height:27px;background:#fff;z-index:1"></div>
<span class="t" style="top:8.9px;left:817px;">Termin</span>
<div class="a hc" style="left:0px;top:30px;width:41px;height:22px"></div>
<span class="t" style="top:34.4px;left:-564px;width:600px;text-align:right;transform-origin:100% 0;">107</span>
<div class="a dc" style="left:41px;top:30px;width:60px;height:22px;background:#1748B6"></div>
<span class="t" style="top:34.4px;left:45px;color:#fff;">Wartung</span>
<div class="a dc" style="left:101px;top:30px;width:60px;height:22px;background:#2163E3"></div>
<span class="t" style="top:34.4px;left:105px;">fertig</span>
<div class="a dc" style="left:161px;top:30px;width:90px;height:22px;background:#2163E3"></div>
<span class="t" style="top:34.4px;left:165px;">---</span>
<div class="a dc" style="left:251px;top:30px;width:80px;height:22px;background:#2163E3"></div>
<span class="t" style="top:34.4px;left:255px;">Strukturierer</span>
<div class="a dc" style="left:331px;top:30px;width:160px;height:22px;background:#2163E3"></div>
<span class="t" style="top:34.4px;left:335px;">P2 Strukturierer (08000.1/SC...</span>
<div class="a dc" style="left:491px;top:30px;width:140px;height:22px;background:#2163E3"></div>
<div class="a dc" style="left:631px;top:30px;width:60px;height:22px;background:#2163E3"></div>
<span class="t" style="top:34.4px;left:635px;">W-SCM-01</span>
<div class="a dc" style="left:691px;top:30px;width:120px;height:22px;background:#2163E3"></div>
<span class="t" style="top:34.4px;left:695px;">tägliche Wartung Na...</span>
<div class="a dc" style="left:811px;top:30px;width:60px;height:22px;background:#2163E3"></div>
<span class="t" style="top:34.4px;left:815px;">26.0</span>
<div class="a hc" style="left:0px;top:52px;width:41px;height:22px"></div>
<span class="t" style="top:56.4px;left:-564px;width:600px;text-align:right;transform-origin:100% 0;">108</span>
<div class="a dc" style="left:41px;top:52px;width:60px;height:22px;background:#9DB2E0"></div>
<span class="t" style="top:56.4px;left:45px;">Wartung</span>
<div class="a dc" style="left:101px;top:52px;width:60px;height:22px;background:#9DB2E0"></div>
<span class="t" style="top:56.4px;left:105px;">fertig</span>
<div class="a dc" style="left:161px;top:52px;width:90px;height:22px;background:#9DB2E0"></div>
<span class="t" style="top:56.4px;left:165px;">---</span>
<div class="a dc" style="left:251px;top:52px;width:80px;height:22px;background:#9DB2E0"></div>
<span class="t" style="top:56.4px;left:255px;">Strukturierer</span>
<div class="a dc" style="left:331px;top:52px;width:160px;height:22px;background:#9DB2E0"></div>
<span class="t" style="top:56.4px;left:335px;">P3 Strukturierer (10000.1/SC...</span>
<div class="a dc" style="left:491px;top:52px;width:140px;height:22px;background:#9DB2E0"></div>
<div class="a dc" style="left:631px;top:52px;width:60px;height:22px;background:#9DB2E0"></div>
<span class="t" style="top:56.4px;left:635px;">W-SCM-01</span>
<div class="a dc" style="left:691px;top:52px;width:120px;height:22px;background:#9DB2E0"></div>
<span class="t" style="top:56.4px;left:695px;">tägliche Wartung Na...</span>
<div class="a dc" style="left:811px;top:52px;width:60px;height:22px;background:#9DB2E0"></div>
<span class="t" style="top:56.4px;left:815px;">26.0</span>
<div class="a hc" style="left:0px;top:74px;width:41px;height:22px"></div>
<span class="t" style="top:78.4px;left:-564px;width:600px;text-align:right;transform-origin:100% 0;">109</span>
<div class="a dc" style="left:41px;top:74px;width:60px;height:22px;background:#9DB2E0"></div>
<span class="t" style="top:78.4px;left:45px;">Wartung</span>
<div class="a dc" style="left:101px;top:74px;width:60px;height:22px;background:#9DB2E0"></div>
<span class="t" style="top:78.4px;left:105px;">fertig</span>
<div class="a dc" style="left:161px;top:74px;width:90px;height:22px;background:#9DB2E0"></div>
<span class="t" style="top:78.4px;left:165px;">---</span>
<div class="a dc" style="left:251px;top:74px;width:80px;height:22px;background:#9DB2E0"></div>
<span class="t" style="top:78.4px;left:255px;">Strukturierer</span>
<div class="a dc" style="left:331px;top:74px;width:160px;height:22px;background:#9DB2E0"></div>
<span class="t" style="top:78.4px;left:335px;">P1 Laser Strukturierer (03000....</span>
<div class="a dc" style="left:491px;top:74px;width:140px;height:22px;background:#9DB2E0"></div>
<div class="a dc" style="left:631px;top:74px;width:60px;height:22px;background:#9DB2E0"></div>
<span class="t" style="top:78.4px;left:635px;">W-SCL-01</span>
<div class="a dc" style="left:691px;top:74px;width:120px;height:22px;background:#9DB2E0"></div>
<span class="t" style="top:78.4px;left:695px;">tägliche Wartung Las...</span>
<div class="a dc" style="left:811px;top:74px;width:60px;height:22px;background:#9DB2E0"></div>
<span class="t" style="top:78.4px;left:815px;">26.0</span>
<div class="a hc" style="left:0px;top:96px;width:41px;height:22px"></div>
<span class="t" style="top:100.4px;left:-564px;width:600px;text-align:right;transform-origin:100% 0;">110</span>
<div class="a dc" style="left:41px;top:96px;width:60px;height:22px;background:#D9A2D0"></div>
<span class="t" style="top:100.4px;left:45px;">Störung</span>
<div class="a dc" style="left:101px;top:96px;width:60px;height:22px;background:#D9A2D0"></div>
<span class="t" style="top:100.4px;left:105px;">fertig</span>
<div class="a dc" style="left:161px;top:96px;width:90px;height:22px;background:#D9A2D0"></div>
<span class="t" style="top:100.4px;left:165px;">---</span>
<div class="a dc" style="left:251px;top:96px;width:80px;height:22px;background:#D9A2D0"></div>
<span class="t" style="top:100.4px;left:255px;">Strukturierer</span>
<div class="a dc" style="left:331px;top:96px;width:160px;height:22px;background:#D9A2D0"></div>
<span class="t" style="top:100.4px;left:335px;">P3 Strukturierer (10000.1/SC...</span>
<div class="a dc" style="left:491px;top:96px;width:140px;height:22px;background:#D9A2D0"></div>
<div class="a dc" style="left:631px;top:96px;width:60px;height:22px;background:#D9A2D0"></div>
<span class="t" style="top:100.4px;left:635px;">S-000-01</span>
<div class="a dc" style="left:691px;top:96px;width:120px;height:22px;background:#D9A2D0"></div>
<span class="t" style="top:100.4px;left:695px;">Störung</span>
<div class="a dc" style="left:811px;top:96px;width:60px;height:22px;background:#D9A2D0"></div>
<div class="a hc" style="left:0px;top:118px;width:41px;height:22px"></div>
<span class="t" style="top:122.4px;left:-564px;width:600px;text-align:right;transform-origin:100% 0;">111</span>
<div class="a dc" style="left:41px;top:118px;width:60px;height:22px;background:#9DB2E0"></div>
<span class="t" style="top:122.4px;left:45px;">Wartung</span>
<div class="a dc" style="left:101px;top:118px;width:60px;height:22px;background:#9DB2E0"></div>
<span class="t" style="top:122.4px;left:105px;">fertig</span>
<div class="a dc" style="left:161px;top:118px;width:90px;height:22px;background:#9DB2E0"></div>
<span class="t" style="top:122.4px;left:165px;">---</span>
<div class="a dc" style="left:251px;top:118px;width:80px;height:22px;background:#9DB2E0"></div>
<span class="t" style="top:122.4px;left:255px;">Strukturierer</span>
<div class="a dc" style="left:331px;top:118px;width:160px;height:22px;background:#9DB2E0"></div>
<span class="t" style="top:122.4px;left:335px;">P2 Strukturierer (08000.1/SC...</span>
<div class="a dc" style="left:491px;top:118px;width:140px;height:22px;background:#9DB2E0"></div>
<div class="a dc" style="left:631px;top:118px;width:60px;height:22px;background:#9DB2E0"></div>
<span class="t" style="top:122.4px;left:635px;">W-SCM-01</span>
<div class="a dc" style="left:691px;top:118px;width:120px;height:22px;background:#9DB2E0"></div>
<span class="t" style="top:122.4px;left:695px;">tägliche Wartung Na...</span>
<div class="a dc" style="left:811px;top:118px;width:60px;height:22px;background:#9DB2E0"></div>
<span class="t" style="top:122.4px;left:815px;">27.0</span>
<div class="a hc" style="left:0px;top:140px;width:41px;height:22px"></div>
<span class="t" style="top:144.4px;left:-564px;width:600px;text-align:right;transform-origin:100% 0;">112</span>
<div class="a dc" style="left:41px;top:140px;width:60px;height:22px;background:#9DB2E0"></div>
<span class="t" style="top:144.4px;left:45px;">Wartung</span>
<div class="a dc" style="left:101px;top:140px;width:60px;height:22px;background:#9DB2E0"></div>
<span class="t" style="top:144.4px;left:105px;">fertig</span>
<div class="a dc" style="left:161px;top:140px;width:90px;height:22px;background:#9DB2E0"></div>
<span class="t" style="top:144.4px;left:165px;">---</span>
<div class="a dc" style="left:251px;top:140px;width:80px;height:22px;background:#9DB2E0"></div>
<span class="t" style="top:144.4px;left:255px;">Strukturierer</span>
<div class="a dc" style="left:331px;top:140px;width:160px;height:22px;background:#9DB2E0"></div>
<span class="t" style="top:144.4px;left:335px;">P3 Strukturierer (10000.1/SC...</span>
<div class="a dc" style="left:491px;top:140px;width:140px;height:22px;background:#9DB2E0"></div>
<div class="a dc" style="left:631px;top:140px;width:60px;height:22px;background:#9DB2E0"></div>
<span class="t" style="top:144.4px;left:635px;">W-SCM-01</span>
<div class="a dc" style="left:691px;top:140px;width:120px;height:22px;background:#9DB2E0"></div>
<span class="t" style="top:144.4px;left:695px;">tägliche Wartung Na...</span>
<div class="a dc" style="left:811px;top:140px;width:60px;height:22px;background:#9DB2E0"></div>
<span class="t" style="top:144.4px;left:815px;">27.0</span>
<div class="a hc" style="left:0px;top:162px;width:41px;height:22px"></div>
<span class="t" style="top:166.4px;left:-564px;width:600px;text-align:right;transform-origin:100% 0;">113</span>
<div class="a dc" style="left:41px;top:162px;width:60px;height:22px;background:#9DB2E0"></div>
<span class="t" style="top:166.4px;left:45px;">Wartung</span>
<div class="a dc" style="left:101px;top:162px;width:60px;height:22px;background:#9DB2E0"></div>
<span class="t" style="top:166.4px;left:105px;">fertig</span>
<div class="a dc" style="left:161px;top:162px;width:90px;height:22px;background:#9DB2E0"></div>
<span class="t" style="top:166.4px;left:165px;">---</span>
<div class="a dc" style="left:251px;top:162px;width:80px;height:22px;background:#9DB2E0"></div>
<span class="t" style="top:166.4px;left:255px;">Strukturierer</span>
<div class="a dc" style="left:331px;top:162px;width:160px;height:22px;background:#9DB2E0"></div>
<span class="t" style="top:166.4px;left:335px;">P1 Laser Strukturierer (03000....</span>
<div class="a dc" style="left:491px;top:162px;width:140px;height:22px;background:#9DB2E0"></div>
<div class="a dc" style="left:631px;top:162px;width:60px;height:22px;background:#9DB2E0"></div>
<span class="t" style="top:166.4px;left:635px;">W-SCL-01</span>
<div class="a dc" style="left:691px;top:162px;width:120px;height:22px;background:#9DB2E0"></div>
<span class="t" style="top:166.4px;left:695px;">tägliche Wartung Las...</span>
<div class="a dc" style="left:811px;top:162px;width:60px;height:22px;background:#9DB2E0"></div>
<span class="t" style="top:166.4px;left:815px;">27.0</span>
<div class="a hc" style="left:0px;top:184px;width:41px;height:22px"></div>
<span class="t" style="top:188.4px;left:-564px;width:600px;text-align:right;transform-origin:100% 0;">114</span>
<div class="a dc" style="left:41px;top:184px;width:60px;height:22px;background:#D9A2D0"></div>
<span class="t" style="top:188.4px;left:45px;">Störung</span>
<div class="a dc" style="left:101px;top:184px;width:60px;height:22px;background:#D9A2D0"></div>
<span class="t" style="top:188.4px;left:105px;">fertig</span>
<div class="a dc" style="left:161px;top:184px;width:90px;height:22px;background:#D9A2D0"></div>
<span class="t" style="top:188.4px;left:165px;">---</span>
<div class="a dc" style="left:251px;top:184px;width:80px;height:22px;background:#D9A2D0"></div>
<span class="t" style="top:188.4px;left:255px;">Strukturierer</span>
<div class="a dc" style="left:331px;top:184px;width:160px;height:22px;background:#D9A2D0"></div>
<span class="t" style="top:188.4px;left:335px;">P1 Laser Strukturierer (03000....</span>
<div class="a dc" style="left:491px;top:184px;width:140px;height:22px;background:#D9A2D0"></div>
<div class="a dc" style="left:631px;top:184px;width:60px;height:22px;background:#D9A2D0"></div>
<span class="t" style="top:188.4px;left:635px;">S-000-01</span>
<div class="a dc" style="left:691px;top:184px;width:120px;height:22px;background:#D9A2D0"></div>
<span class="t" style="top:188.4px;left:695px;">Störung</span>
<div class="a dc" style="left:811px;top:184px;width:60px;height:22px;background:#D9A2D0"></div>
<div class="a hc" style="left:0px;top:206px;width:41px;height:22px"></div>
<span class="t" style="top:210.4px;left:-564px;width:600px;text-align:right;transform-origin:100% 0;">115</span>
<div class="a dc" style="left:41px;top:206px;width:60px;height:22px;background:#9DB2E0"></div>
<span class="t" style="top:210.4px;left:45px;">Wartung</span>
<div class="a dc" style="left:101px;top:206px;width:60px;height:22px;background:#9DB2E0"></div>
<span class="t" style="top:210.4px;left:105px;">fertig</span>
<div class="a dc" style="left:161px;top:206px;width:90px;height:22px;background:#9DB2E0"></div>
<span class="t" style="top:210.4px;left:165px;">---</span>
<div class="a dc" style="left:251px;top:206px;width:80px;height:22px;background:#9DB2E0"></div>
<span class="t" style="top:210.4px;left:255px;">Strukturierer</span>
<div class="a dc" style="left:331px;top:206px;width:160px;height:22px;background:#9DB2E0"></div>
<span class="t" style="top:210.4px;left:335px;">P1 Laser Strukturierer (03000....</span>
<div class="a dc" style="left:491px;top:206px;width:140px;height:22px;background:#9DB2E0"></div>
<div class="a dc" style="left:631px;top:206px;width:60px;height:22px;background:#9DB2E0"></div>
<span class="t" style="top:210.4px;left:635px;">W-SCL-02</span>
<div class="a dc" style="left:691px;top:206px;width:120px;height:22px;background:#9DB2E0"></div>
<span class="t" style="top:210.4px;left:695px;">wöchentliche Wartun...</span>
<div class="a dc" style="left:811px;top:206px;width:60px;height:22px;background:#9DB2E0"></div>
<span class="t" style="top:210.4px;left:815px;">28.0</span>
<div class="a hc" style="left:0px;top:228px;width:41px;height:22px"></div>
<span class="t" style="top:232.4px;left:-564px;width:600px;text-align:right;transform-origin:100% 0;">116</span>
<div class="a dc" style="left:41px;top:228px;width:60px;height:22px;background:#9DB2E0"></div>
<span class="t" style="top:232.4px;left:45px;">Wartung</span>
<div class="a dc" style="left:101px;top:228px;width:60px;height:22px;background:#9DB2E0"></div>
<span class="t" style="top:232.4px;left:105px;">fertig</span>
<div class="a dc" style="left:161px;top:228px;width:90px;height:22px;background:#9DB2E0"></div>
<span class="t" style="top:232.4px;left:165px;">---</span>
<div class="a dc" style="left:251px;top:228px;width:80px;height:22px;background:#9DB2E0"></div>
<span class="t" style="top:232.4px;left:255px;">Strukturierer</span>
<div class="a dc" style="left:331px;top:228px;width:160px;height:22px;background:#9DB2E0"></div>
<span class="t" style="top:232.4px;left:335px;">P1 Laser Strukturierer (03000....</span>
<div class="a dc" style="left:491px;top:228px;width:140px;height:22px;background:#9DB2E0"></div>
<div class="a dc" style="left:631px;top:228px;width:60px;height:22px;background:#9DB2E0"></div>
<span class="t" style="top:232.4px;left:635px;">W-SCL-01</span>
<div class="a dc" style="left:691px;top:228px;width:120px;height:22px;background:#9DB2E0"></div>
<span class="t" style="top:232.4px;left:695px;">tägliche Wartung Las...</span>
<div class="a dc" style="left:811px;top:228px;width:60px;height:22px;background:#9DB2E0"></div>
<span class="t" style="top:232.4px;left:815px;">28.0</span>
<div class="a hc" style="left:0px;top:250px;width:41px;height:22px"></div>
<span class="t" style="top:254.4px;left:-564px;width:600px;text-align:right;transform-origin:100% 0;">117</span>
<div class="a dc" style="left:41px;top:250px;width:60px;height:22px;background:#9DB2E0"></div>
<span class="t" style="top:254.4px;left:45px;">Wartung</span>
<div class="a dc" style="left:101px;top:250px;width:60px;height:22px;background:#9DB2E0"></div>
<span class="t" style="top:254.4px;left:105px;">fertig</span>
<div class="a dc" style="left:161px;top:250px;width:90px;height:22px;background:#9DB2E0"></div>
<span class="t" style="top:254.4px;left:165px;">---</span>
<div class="a dc" style="left:251px;top:250px;width:80px;height:22px;background:#9DB2E0"></div>
<span class="t" style="top:254.4px;left:255px;">Strukturierer</span>
<div class="a dc" style="left:331px;top:250px;width:160px;height:22px;background:#9DB2E0"></div>
<span class="t" style="top:254.4px;left:335px;">P3 Strukturierer (10000.1/SC...</span>
<div class="a dc" style="left:491px;top:250px;width:140px;height:22px;background:#9DB2E0"></div>
<div class="a dc" style="left:631px;top:250px;width:60px;height:22px;background:#9DB2E0"></div>
<span class="t" style="top:254.4px;left:635px;">W-SCM-01</span>
<div class="a dc" style="left:691px;top:250px;width:120px;height:22px;background:#9DB2E0"></div>
<span class="t" style="top:254.4px;left:695px;">tägliche Wartung Na...</span>
<div class="a dc" style="left:811px;top:250px;width:60px;height:22px;background:#9DB2E0"></div>
<span class="t" style="top:254.4px;left:815px;">28.0</span>
</div>
<svg class="a" style="left:125px;top:321.5px" width="16" height="16"><polygon points="5.5,2.5 5.5,13.5 11.5,8" fill="#000"/></svg>
<div class="a dz" style="left:959px;top:289px;width:16px;height:267px"></div>
<div class="a rs2" style="left:959px;top:289px;width:16px;height:15px;background:#D4D0C8"></div>
<svg class="a" style="left:959.0px;top:287.0px" width="16" height="16"><polygon points="4.5,10.5 11.5,10.5 8,6.5" fill="#000"/></svg>
<div class="a rs2" style="left:959px;top:507px;width:16px;height:21px;background:#D4D0C8"></div>
<div class="a rs2" style="left:959px;top:541px;width:16px;height:15px;background:#D4D0C8"></div>
<svg class="a" style="left:959.0px;top:539.8px" width="16" height="16"><polygon points="4.5,6.5 11.5,6.5 8,10.5" fill="#000"/></svg>
<div class="a dz" style="left:125px;top:556px;width:834px;height:16px"></div>
<div class="a rs2" style="left:125px;top:556px;width:16px;height:16px;background:#D4D0C8"></div>
<svg class="a" style="left:125.0px;top:555.5px" width="16" height="16"><polygon points="10.5,4.5 10.5,11.5 6.5,8" fill="#000"/></svg>
<div class="a rs2" style="left:141px;top:556px;width:314px;height:16px;background:#D4D0C8"></div>
<div class="a rs2" style="left:943px;top:556px;width:16px;height:16px;background:#D4D0C8"></div>
<svg class="a" style="left:943.0px;top:555.5px" width="16" height="16"><polygon points="6.5,4.5 6.5,11.5 10.5,8" fill="#000"/></svg>
<div class="a" style="left:959px;top:556px;width:16px;height:16px;background:#D4D0C8;"></div>
</body></html>
